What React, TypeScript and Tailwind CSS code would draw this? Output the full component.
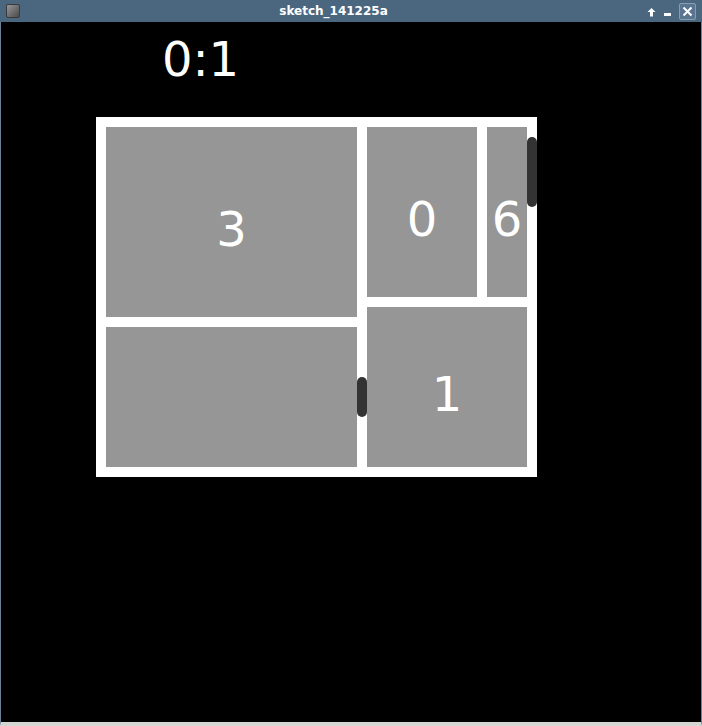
const cell = "flex items-center justify-center bg-[#969696] pt-[14px] text-[48px] leading-none text-white";

function TitleBar() {
  return (
    <div className="relative flex h-[22px] items-center bg-[#4b6780] px-[6px]">
      <div className="h-[14px] w-[14px] rounded-[2px] border border-[#3a3a3a] bg-gradient-to-br from-[#9a9a9a] to-[#4a4a4a]" />
      <div className="flex-1 text-center text-[12px] font-bold text-white">sketch_141225a</div>
      <div className="flex items-center gap-[8px] text-white">
        <svg width="9" height="10" viewBox="0 0 9 10" className="mt-[1px]">
          <path d="M4.5 1 L8.5 5 H6 V9.5 H3 V5 H0.5 Z" fill="white" />
        </svg>
        <div className="mt-[7px] h-[3px] w-[7px] bg-white" />
        <div className="flex h-[17px] w-[17px] items-center justify-center rounded-[2px] border border-[#8a9db0] bg-[#5a7590]">
          <svg width="11" height="11" viewBox="0 0 11 11">
            <path d="M1.5 1.5 L9.5 9.5 M9.5 1.5 L1.5 9.5" stroke="white" strokeWidth="2" />
          </svg>
        </div>
      </div>
    </div>
  );
}

export default function App() {
  return (
    <div className="flex h-[726px] w-[702px] flex-col bg-[#4b6780]" style={{ fontFamily: '"DejaVu Sans", sans-serif' }}>
      <TitleBar />
      <div className="flex-1 border-x border-b-4 border-x-[#6b7f95] border-b-[#d4d6d2] bg-black">
        <div className="mt-[9px] w-[399px] text-center text-[48px] leading-[56px] text-white">0:1</div>
        <div className="relative ml-[95px] mt-[30px] flex w-fit gap-[10px] bg-white p-[10px]">
          <div className="flex w-[251px] flex-col gap-[10px]">
            <div className={`${cell} h-[190px]`}>3</div>
            <div className="h-[140px] bg-[#969696]" />
          </div>
          <div className="flex w-[160px] flex-col gap-[10px]">
            <div className="flex h-[170px] gap-[10px]">
              <div className={`${cell} w-[110px]`}>0</div>
              <div className={`${cell} w-[40px]`}>6</div>
            </div>
            <div className={`${cell} h-[160px]`}>1</div>
          </div>
          <div className="absolute left-[431px] top-[20px] h-[70px] w-[10px] rounded-full bg-[#333333]" />
          <div className="absolute left-[261px] top-[260px] h-[40px] w-[10px] rounded-full bg-[#333333]" />
        </div>
      </div>
    </div>
  );
}
